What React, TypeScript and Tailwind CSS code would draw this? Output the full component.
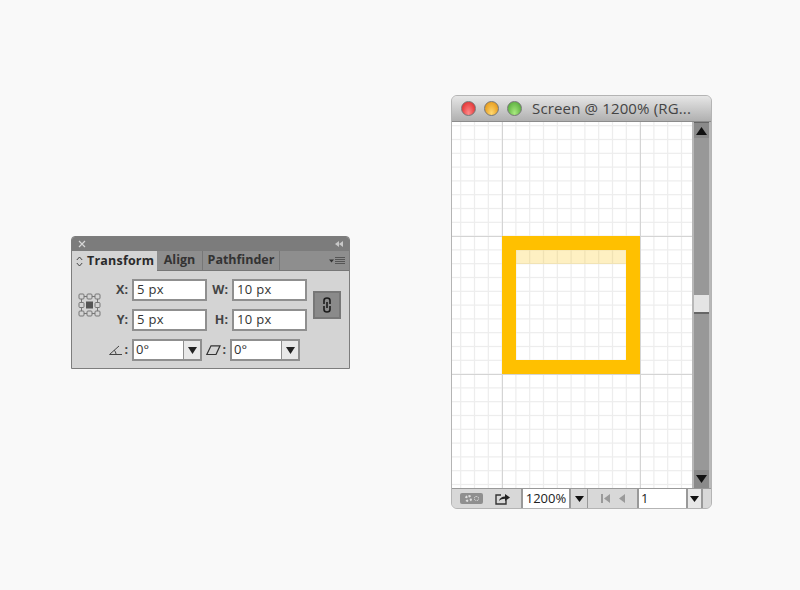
const font = { fontFamily: '"Open Sans", "DejaVu Sans", sans-serif' };

function TextField({ value, width }: { value: string; width: string }) {
  return (
    <div className={`${width} h-[22px] bg-white border-2 border-[#8f8f8f] pl-[3px] flex items-center text-[13px] font-medium text-[#333] tracking-[0.3px]`}>
      {value}
    </div>
  );
}

function SelectField({ value, width }: { value: string; width: string }) {
  return (
    <div className={`${width} h-[22px] bg-white border-2 border-[#8f8f8f] flex items-center text-[13px] font-medium text-[#333]`}>
      <span className="flex-1 pl-[2px]">{value}</span>
      <span className="w-[17px] h-full bg-[#e8e8e8] border-l border-[#8f8f8f] flex items-center justify-center">
        <svg width="9" height="7" viewBox="0 0 9 7">
          <path d="M0 0H9L4.5 7Z" fill="#222" />
        </svg>
      </span>
    </div>
  );
}

function Label({ children, width }: { children: string; width: string }) {
  return <span className={`${width} text-right text-[12.5px] font-bold text-[#444]`}>{children}</span>;
}

function RefPoints() {
  const pts = [0, 1, 2];
  return (
    <svg width="23" height="24" viewBox="0 0 23 24" className="shrink-0">
      {pts.flatMap((r) =>
        pts.map((c) =>
          r === 1 && c === 1 ? (
            <rect key={`${r}${c}`} x={8} y={8.5} width={7} height={7} fill="#555" />
          ) : (
            <rect key={`${r}${c}`} x={c * 8 + 1} y={r * 8.5 + 1} width={5} height={5} rx={1} fill="none" stroke="#777" />
          )
        )
      )}
      <path d="M6 3.5H9M14 3.5H17M6 20.5H9M14 20.5H17M3.5 6V9.5M3.5 15V18M19.5 6V9.5M19.5 15V18" stroke="#777" />
    </svg>
  );
}

function TransformPanel() {
  return (
    <div className="absolute left-[71px] top-[236px] w-[279px] h-[133px] rounded-t-[4px] border border-[#7d7d7d] bg-[#d4d4d4] flex flex-col overflow-hidden" style={font}>
      <div className="h-[14px] bg-[#7c7c7c] flex items-center justify-between px-[6px] text-[#d0d0d0]">
        <svg width="8" height="8" viewBox="0 0 8 8">
          <path d="M1 1L7 7M7 1L1 7" stroke="#d6d6d6" strokeWidth="1.2" />
        </svg>
        <svg width="8" height="6" viewBox="0 0 8 6">
          <path d="M4 0V6L0 3ZM8 0V6L4 3Z" fill="#c8c8c8" />
        </svg>
      </div>
      <div className="h-[20px] bg-[#8e8e8e] flex items-stretch text-[12.5px] font-bold text-[#333] border-b border-[#777]">
        <div className="w-[85px] -mb-px bg-[#d4d4d4] flex items-center gap-[4px] pl-[4px] text-[#2a2a2a] tracking-[0.2px]">
          <svg width="7" height="11" viewBox="0 0 7 11">
            <path d="M0.8 4L3.5 1L6.2 4M0.8 7L3.5 10L6.2 7" fill="none" stroke="#444" />
          </svg>
          Transform
        </div>
        <div className="w-[46px] flex items-center justify-center border-r border-[#777]">Align</div>
        <div className="w-[77px] flex items-center justify-center border-r border-[#777]">Pathfinder</div>
        <div className="flex-1 flex items-center justify-end pr-[4px]">
          <svg width="16" height="8" viewBox="0 0 16 8">
            <path d="M0 2.5H5L2.5 5.5Z" fill="#333" />
            <path d="M6 0.5H16M6 2.5H16M6 4.5H16M6 6.5H16" stroke="#555" />
          </svg>
        </div>
      </div>
      <div className="flex-1 flex pl-[6px] pt-[8px]">
        <div className="flex items-center h-[52px] w-[28px]">
          <RefPoints />
        </div>
        <div className="flex flex-col gap-[8px]">
          <div className="flex items-center gap-[4px]">
            <Label width="w-[22px]">X:</Label>
            <TextField value="5 px" width="w-[75px]" />
            <Label width="w-[17px]">W:</Label>
            <TextField value="10 px" width="w-[75px]" />
          </div>
          <div className="flex items-center gap-[4px]">
            <Label width="w-[22px]">Y:</Label>
            <TextField value="5 px" width="w-[75px]" />
            <Label width="w-[17px]">H:</Label>
            <TextField value="10 px" width="w-[75px]" />
          </div>
          <div className="flex items-center gap-[4px]">
            <span className="w-[22px] flex justify-end items-center gap-[1px] text-[12.5px] font-bold text-[#444]">
              <svg width="14" height="10" viewBox="0 0 14 10" className="shrink-0">
                <path d="M0.5 9.5H13M0.5 9.5L10 1M7 9.5C7 7.5 6 6 5 5" fill="none" stroke="#444" />
              </svg>
              :
            </span>
            <SelectField value="0°" width="w-[70px]" />
            <span className="w-[20px] flex justify-end items-center gap-[1px] text-[12.5px] font-bold text-[#444]">
              <svg width="15" height="10" viewBox="0 0 15 10" className="shrink-0">
                <path d="M0.8 9.5L5 0.8H14L10 9.5Z" fill="none" stroke="#333" strokeWidth="1.2" />
              </svg>
              :
            </span>
            <SelectField value="0°" width="w-[70px]" />
          </div>
        </div>
        <div className="h-[52px] ml-[6px] flex items-center">
          <div className="w-[28px] h-[28px] bg-[#8a8a8a] border-2 border-[#777] flex items-center justify-center">
            <svg width="10" height="16" viewBox="0 0 10 16">
              <path d="M2 7V3.5C2 2 3.2 1 5 1S8 2 8 3.5V7M2 9V12.5C2 14 3.2 15 5 15S8 14 8 12.5V9M5 5V11" fill="none" stroke="#1c1c1c" strokeWidth="1.6" />
            </svg>
          </div>
        </div>
      </div>
    </div>
  );
}

function ArtGrid() {
  const xs = Array.from({ length: 18 }, (_, i) => 502 - 452 + (i - 3) * 13.8);
  const ys = Array.from({ length: 27 }, (_, i) => 236 - 122 + (i - 8) * 13.8);
  return (
    <svg width="240" height="366" viewBox="0 0 240 366" className="block">
      <rect width="240" height="366" fill="#fff" />
      {xs.map((x) => (
        <rect key={x} x={x - 0.5} y={0} width={1.2} height={366} fill="#ededed" />
      ))}
      {ys.map((y) => (
        <rect key={y} x={0} y={y - 0.5} width={240} height={1.2} fill="#ededed" />
      ))}
      <rect x={50} y={0} width={1} height={366} fill="#d4d4d4" />
      <rect x={188} y={0} width={1} height={366} fill="#d4d4d4" />
      <rect x={0} y={114} width={240} height={1} fill="#d4d4d4" />
      <rect x={0} y={252} width={240} height={1} fill="#d4d4d4" />
      <rect x={64} y={128} width={110} height={14} fill="#fcc200" opacity={0.24} />
      <path d="M50 114H188V252H50ZM64 128V238H174V128Z" fill="#ffc000" fillRule="evenodd" />
    </svg>
  );
}

function Light({ from, to }: { from: string; to: string }) {
  return <span className={`w-[15px] h-[15px] rounded-full border border-[#777] bg-radial-[at_50%_85%] ${from} ${to}`} />;
}

function ScreenWindow() {
  return (
    <div className="absolute left-[451px] top-[95px] w-[261px] h-[414px] rounded-[6px] border border-[#b4b4b4] bg-[#dcdcdc] flex flex-col overflow-hidden" style={font}>
      <div className="h-[26px] bg-gradient-to-b from-[#e6e6e6] to-[#b0b0b0] flex items-center pl-[9px] gap-[8px] border-b border-[#8c8c8c]">
        <Light from="from-[#ff8a8a]" to="to-[#dc2020]" />
        <Light from="from-[#ffd870]" to="to-[#e08c08]" />
        <Light from="from-[#aaea80]" to="to-[#48a030]" />
        <span className="ml-[2px] text-[15px] text-[#444] whitespace-nowrap tracking-[0.15px]">Screen @ 1200% (RG...</span>
      </div>
      <div className="flex-1 flex min-h-0">
        <div className="w-[240px] overflow-hidden">
          <ArtGrid />
        </div>
        <div className="w-[19px] bg-[#989898] border-x-2 border-[#b8b8b8] flex flex-col items-center">
          <div className="w-full h-[16px] bg-[#8a8a8a] border-t border-[#666] flex items-center justify-center">
            <svg width="11" height="8" viewBox="0 0 11 8">
              <path d="M5.5 0L11 8H0Z" fill="#111" />
            </svg>
          </div>
          <div className="flex-1 w-full flex flex-col pt-[157px]">
            <div className="h-[19px] w-full bg-[#e4e4e4] border-b-2 border-[#666]" />
          </div>
          <div className="w-full h-[18px] bg-[#8a8a8a] flex items-center justify-center">
            <svg width="11" height="8" viewBox="0 0 11 8">
              <path d="M0 0H11L5.5 8Z" fill="#111" />
            </svg>
          </div>
        </div>
      </div>
      <div className="h-[20px] bg-[#d8d8d8] border-t border-[#999] flex items-center text-[13px] text-[#222]">
        <div className="ml-[8px] w-[23px] h-[11px] rounded-[2px] bg-[#8f8f8f] flex items-center justify-center gap-[2px]">
          <span className="w-[7px] h-[7px] rounded-full border-2 border-dotted border-[#e0e0e0]" />
          <span className="w-[5px] h-[5px] rounded-full border border-dotted border-[#e0e0e0]" />
        </div>
        <svg width="15" height="12" viewBox="0 0 15 12" className="ml-[12px]">
          <path d="M6 2H1V11H11V7" fill="none" stroke="#333" strokeWidth="1.4" />
          <path d="M4 8C4.5 5 7 3.5 10 3.5V1L15 4.5L10 8V5.8C7.5 5.8 5.5 6.5 4 8Z" fill="#222" />
        </svg>
        <div className="ml-[11px] w-[50px] h-full bg-white border-x-2 border-[#999] flex items-center justify-center">1200%</div>
        <div className="w-[17px] h-full flex items-center justify-center border-r border-[#999]">
          <svg width="9" height="6" viewBox="0 0 9 6">
            <path d="M0 0H9L4.5 6Z" fill="#111" />
          </svg>
        </div>
        <div className="w-[49px] flex items-center justify-center gap-[9px]">
          <svg width="9" height="9" viewBox="0 0 9 9">
            <path d="M0 0H2V9H0ZM9 0V9L3 4.5Z" fill="#9a9a9a" />
          </svg>
          <svg width="6" height="9" viewBox="0 0 6 9">
            <path d="M6 0V9L0 4.5Z" fill="#9a9a9a" />
          </svg>
        </div>
        <div className="w-[49px] h-full bg-white border-l-2 border-[#999] pl-[2px] flex items-center">1</div>
        <div className="w-[17px] h-full bg-[#e8e8e8] border-x-2 border-[#999] flex items-center justify-center">
          <svg width="9" height="6" viewBox="0 0 9 6">
            <path d="M0 0H9L4.5 6Z" fill="#111" />
          </svg>
        </div>
      </div>
    </div>
  );
}

export default function App() {
  return (
    <div className="relative w-[800px] h-[590px] bg-[#f9f9f9] overflow-hidden">
      <TransformPanel />
      <ScreenWindow />
    </div>
  );
}
